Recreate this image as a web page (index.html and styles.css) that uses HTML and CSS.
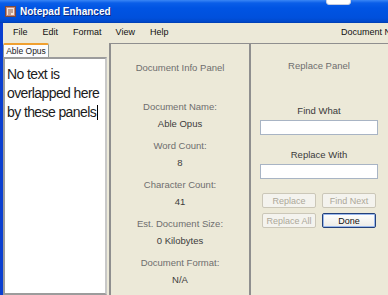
FILE: index.html
```html
<!DOCTYPE html>
<html lang="en">
<head>
  <meta charset="UTF-8">
  <title>Notepad Enhanced</title>
  <link rel="stylesheet" href="styles.css">
</head>
<body>
  <div class="window">
    <div class="titlebar">
      <svg class="app-icon" width="11" height="11" viewBox="0 0 11 11">
        <rect x="0.5" y="0.5" width="10" height="10" fill="#c98a7a" stroke="#7a4a3e"/>
        <rect x="2" y="2" width="7" height="7" fill="#f4e6dc"/>
        <path d="M3 4h5M3 6h5M3 8h3" stroke="#8a5a4a" stroke-width="1"/>
      </svg>
      <span class="title">Notepad Enhanced</span>
      <span class="tip"></span>
    </div>

    <div class="frame">
      <div class="menubar">
        <span>File</span>
        <span>Edit</span>
        <span>Format</span>
        <span>View</span>
        <span>Help</span>
        <span class="doc-label">Document Name</span>
      </div>

      <div class="workarea">
        <div class="editor">
          <div class="tabs">
            <div class="tab active">Able Opus</div>
          </div>
          <div class="textbox">No text is<br>overlapped here<br>by these panels<span class="caret"></span></div>
        </div>

        <div class="panel info">
          <div class="panel-title">Document Info Panel</div>
          <div class="field">
            <div class="label">Document Name:</div>
            <div class="value">Able Opus</div>
          </div>
          <div class="field">
            <div class="label">Word Count:</div>
            <div class="value">8</div>
          </div>
          <div class="field">
            <div class="label">Character Count:</div>
            <div class="value">41</div>
          </div>
          <div class="field">
            <div class="label">Est. Document Size:</div>
            <div class="value">0 Kilobytes</div>
          </div>
          <div class="field">
            <div class="label">Document Format:</div>
            <div class="value">N/A</div>
          </div>
        </div>

        <div class="panel replace">
          <div class="panel-title">Replace Panel</div>
          <label class="input-label">Find What</label>
          <input type="text" class="xp-input">
          <label class="input-label">Replace With</label>
          <input type="text" class="xp-input">
          <div class="buttons">
            <button disabled>Replace</button>
            <button disabled>Find Next</button>
            <button disabled>Replace All</button>
            <button class="default">Done</button>
          </div>
        </div>
      </div>
    </div>
  </div>
</body>
</html>
```

FILE: styles.css
```css
body {
  margin: 0;
  width: 388px;
  height: 295px;
  overflow: hidden;
  font-family: 'Liberation Sans', Arial, sans-serif;
  background: #ece9d8;
}

.window {
  height: 295px;
  display: flex;
  flex-direction: column;
}

.titlebar {
  height: 23px;
  display: flex;
  align-items: center;
  padding-left: 5px;
  background: linear-gradient(#3a86f5 0, #0a5ee8 3px, #0054e3 8px, #0050dc 18px, #0047c8 22px, #003aa8 23px);
  position: relative;
  flex-shrink: 0;
}

.app-icon {
  margin-right: 4px;
}

.title {
  color: #fff;
  font-weight: bold;
  font-size: 10px;
  text-shadow: 1px 1px 0 #0a2a80;
}

.tip {
  position: absolute;
  left: 326px;
  top: -4px;
  width: 23px;
  height: 7px;
  background: #fff;
  border: 1px solid #c6cde0;
  border-radius: 3px;
}

.frame {
  flex: 1;
  display: flex;
  flex-direction: column;
  border-left: 3px solid #0a3fd0;
  min-height: 0;
}

.menubar {
  height: 17px;
  display: flex;
  align-items: center;
  padding-left: 10px;
  font-size: 9px;
  color: #111;
  background: #ece9d8;
  flex-shrink: 0;
}

.menubar span {
  margin-right: 15px;
}

.menubar span:nth-child(3) {
  margin-right: 14px;
}

.menubar .doc-label {
  margin: 0 0 0 auto;
  width: 47px;
  overflow: hidden;
  white-space: nowrap;
}

.workarea {
  flex: 1;
  display: flex;
  min-height: 0;
}

.editor {
  width: 104px;
  display: flex;
  flex-direction: column;
  margin-right: 2px;
}

.tabs {
  height: 17px;
  display: flex;
  align-items: flex-end;
  flex-shrink: 0;
}

.tab {
  width: 46px;
  height: 14px;
  background: #fcfcfe;
  border: 1px solid #919b9c;
  border-bottom: none;
  border-top: 2px solid #f0a030;
  border-radius: 2px 2px 0 0;
  font-size: 8.5px;
  color: #222;
  text-align: center;
  line-height: 13px;
  box-sizing: border-box;
}

.textbox {
  flex: 1;
  background: #fff;
  border: 2px solid #9c9c9c;
  border-right-color: #c8c8c8;
  padding: 6px 2px;
  font-size: 14px;
  line-height: 19px;
  letter-spacing: -0.6px;
  color: #1c1c1c;
  white-space: nowrap;
  overflow: hidden;
}

.caret {
  display: inline-block;
  width: 1px;
  height: 15px;
  margin-left: 1px;
  background: #000;
  vertical-align: -3px;
}

.panel {
  margin-top: 3px;
  border-top: 1px solid #8f8f8f;
  border-left: 2px solid #8f8f8f;
  text-align: center;
  font-size: 9.5px;
  color: #6e6e6e;
}

.info {
  width: 138px;
  padding-top: 15px;
}

.replace {
  flex: 1;
  padding: 13px 10px 0 9px;
}

.panel-title {
  line-height: 17px;
  margin-bottom: 22px;
}

.field {
  margin-bottom: 4px;
}

.label {
  line-height: 17px;
}

.value {
  line-height: 18px;
  color: #3c3c3c;
}

.replace .panel-title {
  margin-bottom: 31px;
}

.input-label {
  display: block;
  line-height: 12px;
  color: #3a3a3a;
  margin-bottom: 3px;
}

.xp-input {
  display: block;
  width: 100%;
  height: 15px;
  box-sizing: border-box;
  border: 1px solid #a8b4c4;
  background: #fff;
  margin: 0 0 14px;
  padding: 0;
}

.buttons {
  display: grid;
  grid-template-columns: 54px 54px;
  gap: 5px 6px;
  justify-content: center;
  margin-top: 8px;
}

.buttons button {
  height: 15px;
  padding: 0;
  font-family: 'Liberation Sans', Arial, sans-serif;
  font-size: 9px;
  color: #aca899;
  background: #f4f3ee;
  border: 1px solid #cbc7b8;
  border-radius: 2px;
}

.buttons .default {
  color: #111;
  background: linear-gradient(#ffffff, #ecebe6);
  border: 1px solid #23407a;
  box-shadow: inset 0 0 0 1px #9ab8ec;
}
```
